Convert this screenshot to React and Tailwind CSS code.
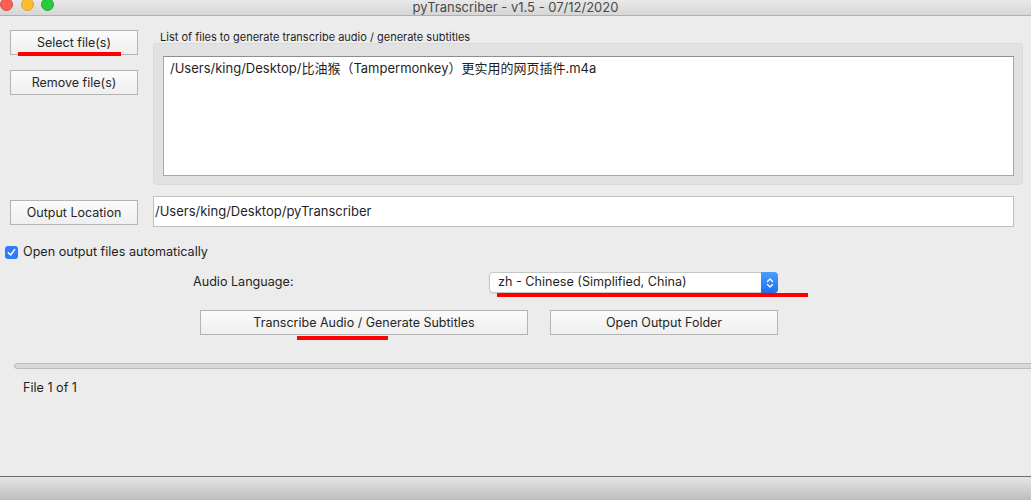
import React from 'react';

const font = { fontFamily: 'Inter, "Noto Sans CJK SC", sans-serif' };

const MacButton = ({ children, className = '' }) => (
  <button
    className={`flex items-center justify-center h-[25px] pt-[2px] border border-[#b4b4b4] bg-gradient-to-b from-[#fbfbfb] to-[#efefef] text-[12.5px] text-[#262626] ${className}`}
  >
    {children}
  </button>
);

const RedMark = ({ className }) => <div className={`absolute h-[4px] bg-[#ff0000] ${className}`} />;

const App = () => {
  return (
    <div
      className="relative w-[1031px] h-[500px] bg-[#ececec] flex flex-col overflow-hidden text-[#1f1f1f]"
      style={font}
    >
      {/* title bar */}
      <div className="relative h-[16px] shrink-0 bg-gradient-to-b from-[#e8e8e8] to-[#d6d6d6] border-b border-[#b0b0b0] flex items-center justify-center">
        <div className="absolute left-0 top-[-2px] flex gap-[7px]">
          <div className="w-[13px] h-[13px] rounded-full bg-[#fc5f57] border border-[#e0443e]" />
          <div className="w-[13px] h-[13px] rounded-full bg-[#fdbc2e] border border-[#dea123] ml-[1px]" />
          <div className="w-[13px] h-[13px] rounded-full bg-[#29c940] border border-[#1aab29]" />
        </div>
        <span className="text-[13px] leading-none text-[#4a4a4a] mt-[-1px]">pyTranscriber - v1.5 - 07/12/2020</span>
      </div>

      {/* files section */}
      <div className="flex mt-[14px]">
        <div className="flex flex-col gap-[15px] pl-[10px] w-[153px]">
          <MacButton className="w-[128px]">Select file(s)</MacButton>
          <MacButton className="w-[128px]">Remove file(s)</MacButton>
        </div>
        <div className="flex flex-col">
          <div className="text-[11px] leading-[12px] pl-[7px] pt-[1px] h-[13px] text-[#1f1f1f]">
            List of files to generate transcribe audio / generate subtitles
          </div>
          <div className="w-[870px] h-[142px] bg-[#e2e2e2] rounded-[4px] border border-[#dadada] pl-[9px] pt-[12px]">
            <div className="w-[851px] h-[120px] bg-white border border-[#a8a8a8] border-t-[#8e8e8e] px-[6px] pt-[2px] text-[13px] leading-[18px]">
              /Users/king/Desktop/比油猴（Tampermonkey）更实用的网页插件.m4a
            </div>
          </div>
        </div>
      </div>

      {/* output location */}
      <div className="flex items-center mt-[11px]">
        <MacButton className="ml-[10px] mt-[2px] w-[128px]">Output Location</MacButton>
        <div className="ml-[15px] w-[861px] h-[31px] bg-white border border-[#c0c0c0] flex items-center px-[1px] text-[13px]">
          /Users/king/Desktop/pyTranscriber
        </div>
      </div>

      {/* checkbox */}
      <div className="flex items-center mt-[18px] pl-[5px] h-[14px]">
        <div className="w-[13px] h-[13px] rounded-[3px] bg-[#2f7df6] flex items-center justify-center">
          <svg width="9" height="9" viewBox="0 0 10 10">
            <path d="M1.5 5.2 L4 7.8 L8.5 1.8" fill="none" stroke="white" strokeWidth="1.7" strokeLinecap="round" strokeLinejoin="round" />
          </svg>
        </div>
        <span className="ml-[5px] text-[12.6px]">Open output files automatically</span>
      </div>

      {/* audio language */}
      <div className="flex items-center mt-[13px] h-[21px]">
        <span className="ml-[193px] w-[296px] text-[12.6px]">Audio Language:</span>
        <div className="w-[289px] h-[21px] bg-white rounded-[4px] border border-[#c6c6c6] flex items-center shadow-[0_1px_1px_rgba(0,0,0,0.08)]">
          <span className="flex-1 pl-[8px] text-[12.6px]">zh - Chinese (Simplified, China)</span>
          <div className="w-[17px] h-[21px] -mr-[1px] -my-[1px] rounded-r-[4px] bg-gradient-to-b from-[#4d9df8] to-[#1a6ff2] flex items-center justify-center">
            <svg width="8" height="12" viewBox="0 0 8 12">
              <path d="M1.5 4.5 L4 2 L6.5 4.5 M1.5 7.5 L4 10 L6.5 7.5" fill="none" stroke="white" strokeWidth="1.3" strokeLinecap="round" strokeLinejoin="round" />
            </svg>
          </div>
        </div>
      </div>

      {/* action buttons */}
      <div className="flex mt-[17px]">
        <MacButton className="ml-[200px] w-[328px]">Transcribe Audio / Generate Subtitles</MacButton>
        <MacButton className="ml-[22px] w-[228px]">Open Output Folder</MacButton>
      </div>

      {/* progress bar */}
      <div className="mt-[28px] ml-[14px] w-[1030px] h-[6px] rounded-l-full bg-[#d9d9d9] border border-[#bdbdbd]" />

      <div className="ml-[23px] mt-[11px] text-[12.6px] leading-[16px]">File 1 of 1</div>

      {/* bottom bar */}
      <div className="absolute left-0 right-0 bottom-0 h-[24px] border-t border-[#6a6a6a] bg-gradient-to-b from-[#e6e6e6] to-[#bdbdbd]" />

      {/* red annotation marks */}
      <RedMark className="left-[18px] top-[52px] w-[103px]" />
      <RedMark className="left-[497px] top-[293px] w-[311px]" />
      <RedMark className="left-[297px] top-[336px] w-[91px]" />
    </div>
  );
};

export default App;
